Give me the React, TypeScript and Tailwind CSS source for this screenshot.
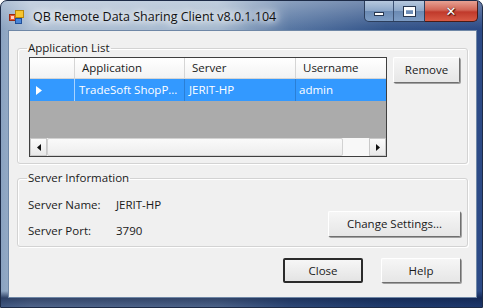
import React from "react";

// Win7 style dialog: "QB Remote Data Sharing Client"

const btn =
  "flex items-center justify-center rounded-[2px] border border-t-[#ffffff] border-l-[#ffffff] border-r-[#6f6f6f] border-b-[#6f6f6f] bg-[linear-gradient(180deg,#f6f6f6,#e6e6e6)] shadow-[1px_1px_0_#a0a0a0] text-[#1a1a1a]";

function AppIcon() {
  return (
    <svg width="15" height="14" viewBox="0 0 15 14">
      <rect x="0.5" y="4.5" width="6" height="6" fill="#e4572e" stroke="#9c2a12" />
      <rect x="6.5" y="0.5" width="8" height="7" fill="#f6c530" stroke="#b8860b" />
      <rect x="6.5" y="8.5" width="6" height="5" fill="#4a86d8" stroke="#1f4f9a" />
      <rect x="2" y="6" width="3" height="3" fill="#ffd2c2" />
    </svg>
  );
}

function WindowButtons() {
  return (
    <div className="flex h-[21px] mr-[4px]">
      <div className="flex rounded-bl-[5px] border border-t-0 border-[#2c3e5c] overflow-hidden bg-[linear-gradient(180deg,#b6c8de,#8ba6c8_50%,#6b8ab3_51%,#7d9cc4)]">
        <div className="w-[29px] h-full flex items-end justify-center pb-[5px] border-r border-[#3d5274]">
          <div className="w-[10px] h-[4px] bg-white border border-[#27364f]" />
        </div>
        <div className="w-[30px] h-full flex items-center justify-center">
          <div className="w-[11px] h-[9px] border-2 border-white outline outline-1 outline-[#27364f] border-t-[3px]" />
        </div>
      </div>
      <div className="w-[53px] h-full rounded-br-[5px] border border-t-0 border-l-0 border-[#4a1b16] bg-[linear-gradient(180deg,#e7a193,#d26656_45%,#c0392b_55%,#d85a45)] flex items-center justify-center">
        <span className="text-white text-[13px] font-bold leading-none font-['DejaVu_Sans',sans-serif] [text-shadow:0_0_1px_#3a0d08,1px_1px_1px_#3a0d08]">
          ✕
        </span>
      </div>
    </div>
  );
}

function DataGrid() {
  return (
    <div className="w-[358px] h-[100px] border border-[#3f3f3f] flex flex-col bg-[#ababab] shrink-0">
      {/* header */}
      <div className="flex h-[21px] bg-[linear-gradient(180deg,#ffffff,#f3f3f3)] border-b border-[#d5d5d5] text-[#1a1a1a]">
        <div className="w-[45px] border-r border-[#d5d5d5]" />
        <div className="w-[110px] border-r border-[#d5d5d5] pl-[7px] flex items-center">Application</div>
        <div className="w-[111px] border-r border-[#d5d5d5] pl-[7px] flex items-center">Server</div>
        <div className="flex-1 pl-[7px] flex items-center">Username</div>
      </div>
      {/* selected row */}
      <div className="flex h-[22px] bg-[#3399ff] text-white">
        <div className="w-[45px] border-r border-[#a9d3ff] flex items-center pl-[6px]">
          <svg width="6" height="9" viewBox="0 0 6 9">
            <path d="M0 0 L6 4.5 L0 9 Z" fill="#ffffff" />
          </svg>
        </div>
        <div className="w-[110px] border-r border-[#2a7fd6] pl-[4px] flex items-center whitespace-nowrap overflow-hidden">
          TradeSoft ShopP...
        </div>
        <div className="w-[111px] border-r border-[#2a7fd6] pl-[4px] flex items-center">JERIT-HP</div>
        <div className="flex-1 pl-[3px] flex items-center">admin</div>
      </div>
      <div className="flex-1" />
      {/* horizontal scrollbar */}
      <div className="h-[18px] flex bg-[#f2f2f2]">
        <div className="w-[17px] border border-[#c9c9c9] bg-[linear-gradient(180deg,#fbfbfb,#e9e9e9)] flex items-center justify-center">
          <svg width="4" height="7" viewBox="0 0 4 7">
            <path d="M4 0 L0 3.5 L4 7 Z" fill="#111" />
          </svg>
        </div>
        <div className="w-[296px] border border-[#d2d2d2] rounded-[2px] bg-[linear-gradient(180deg,#fafafa,#ededed)]" />
        <div className="flex-1 bg-[#f8f8f8]" />
        <div className="w-[17px] border border-[#c9c9c9] bg-[linear-gradient(180deg,#fbfbfb,#e9e9e9)] flex items-center justify-center">
          <svg width="4" height="7" viewBox="0 0 4 7">
            <path d="M0 0 L4 3.5 L0 7 Z" fill="#111" />
          </svg>
        </div>
      </div>
    </div>
  );
}

export default function App() {
  return (
    <div className="w-[483px] h-[308px] flex flex-col overflow-hidden rounded-t-[7px] border border-[#1d2b47] bg-[linear-gradient(180deg,rgba(255,255,255,0.3)_0px,rgba(255,255,255,0)_28px,rgba(0,0,0,0)_290px,rgba(12,30,70,0.75)_297px,rgba(20,45,95,0.6)_307px),linear-gradient(90deg,#8aa2c0_0%,#aebfd4_6%,#a5b9cf_45%,#5877a3_60%,#34558a_80%,#2c4a86_100%)] font-['Open_Sans',sans-serif] text-[11.5px]">
      {/* title bar */}
      <div className="h-[29px] flex items-start shrink-0">
        <div className="h-[29px] flex items-center pl-[8px] gap-[9px] pt-[3px]">
          <AppIcon />
          <span className="text-[12.5px] text-[#111] leading-none [text-shadow:0_0_6px_#ffffff,0_0_10px_#ffffff,0_0_14px_#ffffff]">
            QB Remote Data Sharing Client v8.0.1.104
          </span>
        </div>
        <div className="ml-auto">
          <WindowButtons />
        </div>
      </div>

      {/* client area */}
      <div className="ml-[7px] mr-[5px] mb-[9px] flex-1 border border-[#6f87a6] bg-[#f0f0f0] flex flex-col px-[8px] text-[#1a1a1a]">
        <fieldset className="mt-[10px] border border-[#d3d3d3] rounded-[3px] pl-[11px] pr-[6px] pt-[2px] pb-[6px] shadow-[inset_1px_1px_0_#ffffff,1px_1px_0_#ffffff]">
          <legend className="-ml-[2px] px-[1px] leading-[14px]">Application List</legend>
          <div className="flex gap-[6px] items-start">
            <DataGrid />
            <button className={`${btn} w-[67px] h-[26px]`}>Remove</button>
          </div>
        </fieldset>

        <fieldset className="mt-[7px] border border-[#d3d3d3] rounded-[3px] pl-[10px] pr-[6px] pt-0 pb-[8px] shadow-[inset_1px_1px_0_#ffffff,1px_1px_0_#ffffff]">
          <legend className="-ml-[1px] px-[1px] leading-[14px]">Server Information</legend>
          <div className="flex items-end justify-between">
            <div className="pt-[13px] flex flex-col gap-[12px]">
              <div className="flex h-[14px] items-center">
                <span className="w-[88px]">Server Name:</span>
                <span>JERIT-HP</span>
              </div>
              <div className="flex h-[14px] items-center">
                <span className="w-[88px]">Server Port:</span>
                <span>3790</span>
              </div>
            </div>
            <button className={`${btn} w-[133px] h-[26px] mb-[1px]`}>Change Settings...</button>
          </div>
        </fieldset>

        <div className="mt-[11px] flex justify-end gap-[18px] pr-[7px]">
          <button className="w-[80px] h-[25px] flex items-center justify-center rounded-[2px] border-2 border-[#2b2b2b] bg-[linear-gradient(180deg,#f6f6f6,#e4e4e4)] text-[#1a1a1a]">
            Close
          </button>
          <button className={`${btn} w-[80px] h-[25px]`}>Help</button>
        </div>
      </div>
    </div>
  );
}
